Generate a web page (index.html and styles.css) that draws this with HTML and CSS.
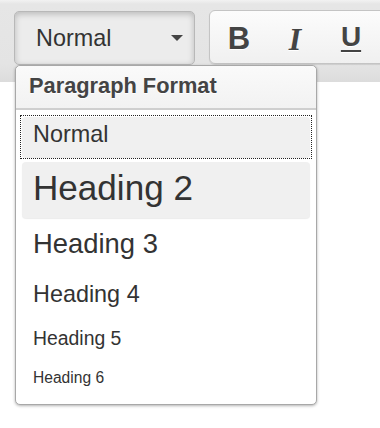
FILE: index.html
```html
<!DOCTYPE html>
<html lang="en">
<head>
    <meta charset="UTF-8">
    <meta name="viewport" content="width=device-width, initial-scale=1.0">
    <title>Editor - Paragraph Format</title>
    <link rel="stylesheet" href="styles.css">
</head>
<body>

    <div class="toolbar">
        <div class="format-btn">
            <span>Normal</span>
            <span class="caret"></span>
        </div>
        <div class="style-group">
            <span class="tb-btn bold">B</span>
            <span class="tb-btn italic">I</span>
            <span class="tb-btn underline">U</span>
        </div>
    </div>

    <div class="editor"></div>

    <div class="format-menu">
        <div class="menu-title">Paragraph Format</div>
        <div class="menu-list">
            <div class="item normal focused">Normal</div>
            <div class="item h2 hover">Heading 2</div>
            <div class="item h3">Heading 3</div>
            <div class="item h4">Heading 4</div>
            <div class="item h5">Heading 5</div>
            <div class="item h6">Heading 6</div>
        </div>
    </div>

</body>
</html>
```

FILE: styles.css
```css
body {
    margin: 0;
    font-family: "Liberation Sans", Arial, sans-serif;
    background-color: #fff;
    color: #333;
}
.toolbar {
    height: 82px;
    box-sizing: border-box;
    display: flex;
    align-items: flex-start;
    gap: 14px;
    padding: 10px 0 0 14px;
    background: linear-gradient(#f2f2f2 0, #e6e6e6 4px, #e4e4e4 64px, #dcdcdc 82px);
    overflow: hidden;
}
.format-btn {
    flex: none;
    width: 181px;
    height: 54px;
    box-sizing: border-box;
    margin-top: 1px;
    display: flex;
    align-items: center;
    padding: 0 11px 0 21px;
    border: 1px solid #b8b8b8;
    border-radius: 5px;
    background-color: #ececec;
    box-shadow: inset 0 2px 6px rgba(0,0,0,0.22);
    font-size: 23.4px;
    color: #333;
}
.caret {
    margin-left: auto;
    width: 0;
    height: 0;
    border-top: 6px solid #444;
    border-left: 6px solid transparent;
    border-right: 6px solid transparent;
}
.style-group {
    flex: none;
    width: 200px;
    height: 54px;
    box-sizing: border-box;
    display: flex;
    align-items: center;
    padding: 4px 0 0 1px;
    border: 1px solid #c4c4c4;
    border-radius: 6px;
    background: linear-gradient(#fcfcfc, #f0f0f0);
    box-shadow: 0 1px 1px rgba(0,0,0,0.1);
}
.tb-btn {
    flex: none;
    width: 56px;
    text-align: center;
    color: #444;
    text-shadow: 0 1px 0 #fff;
}
.tb-btn.bold {
    font-size: 31px;
    font-weight: bold;
}
.tb-btn.italic {
    font-family: "Liberation Serif", serif;
    font-size: 32px;
    font-weight: bold;
    font-style: italic;
}
.tb-btn.underline {
    font-size: 28px;
    font-weight: bold;
    text-decoration: underline;
    text-decoration-thickness: 2px;
    text-underline-offset: 4px;
    margin-top: -4px;
}
.format-menu {
    position: absolute;
    left: 15px;
    top: 65px;
    width: 302px;
    box-sizing: border-box;
    background-color: #fff;
    border: 1px solid #a8a8a8;
    border-radius: 5px;
    box-shadow: 0 1px 3px rgba(0,0,0,0.3);
}
.menu-title {
    line-height: 40px;
    padding: 0 0 2px 13px;
    font-size: 21.8px;
    font-weight: bold;
    color: #444;
    text-shadow: 0 1px 0 #fff;
    background: linear-gradient(#fafafa, #f2f2f2);
    border-bottom: 2px solid #cfcfcf;
    border-radius: 5px 5px 0 0;
}
.menu-list {
    padding: 7px 6px 2px;
}
.item {
    position: relative;
    padding: 0 11px 5px;
    margin-bottom: 5px;
    border-radius: 4px;
    color: #333;
    white-space: nowrap;
}
/* focus ring is square even though the item is rounded */
.item.focused::before {
    content: "";
    position: absolute;
    top: -2px;
    right: -2px;
    bottom: -2px;
    left: -2px;
    border: 1px dotted #222;
}
.item.focused, .item.hover {
    background-color: #f0f0f0;
    box-shadow: 0 1px 1px rgba(0,0,0,0.08);
}
.item.normal { font-size: 23.4px; line-height: 35px; }
.item.h2 { font-size: 35.1px; line-height: 51px; }
.item.h3 { font-size: 27.4px; line-height: 41px; }
.item.h4 { font-size: 23.4px; line-height: 40px; }
.item.h5 { font-size: 19.4px; line-height: 29px; }
.item.h6 { font-size: 15.6px; line-height: 29px; }
```
